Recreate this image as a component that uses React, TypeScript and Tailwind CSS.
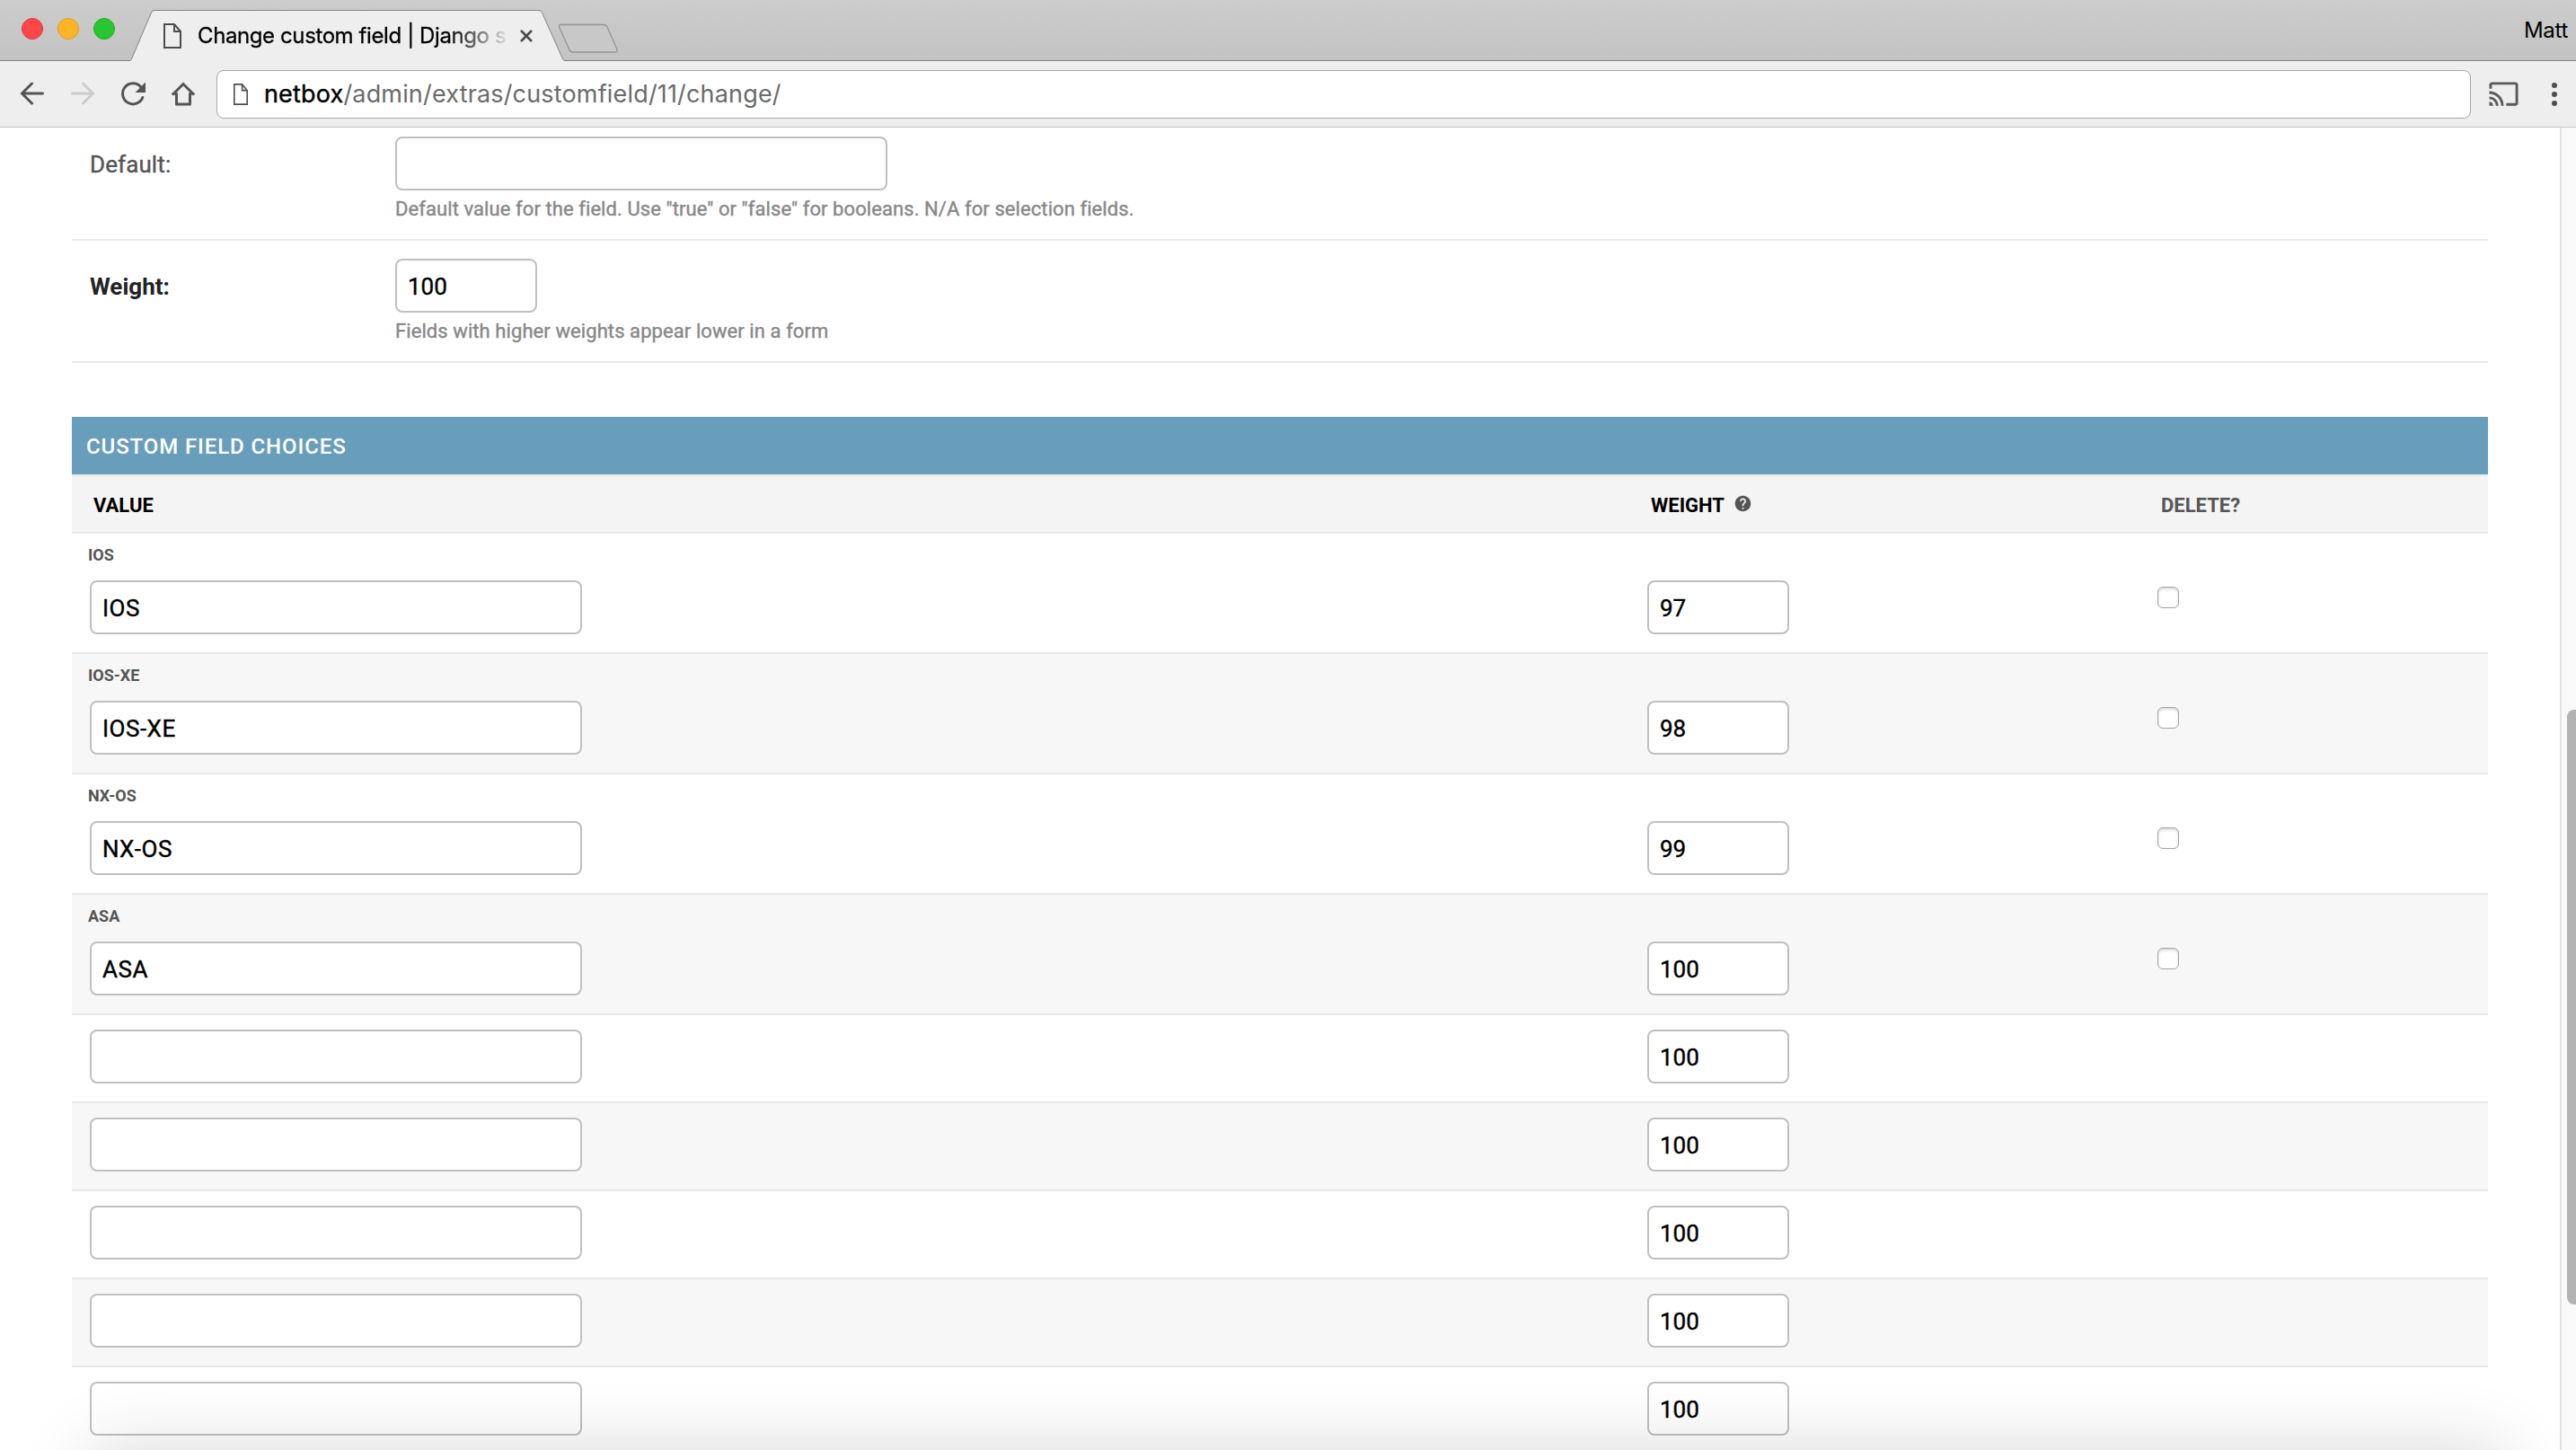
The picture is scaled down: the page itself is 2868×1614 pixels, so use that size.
import { MdCast, MdHelp } from 'react-icons/md';

type Choice = {
    label?: string;
    value: string;
    weight: string;
};

const choices: Choice[] = [
    { label: 'IOS', value: 'IOS', weight: '97' },
    { label: 'IOS-XE', value: 'IOS-XE', weight: '98' },
    { label: 'NX-OS', value: 'NX-OS', weight: '99' },
    { label: 'ASA', value: 'ASA', weight: '100' },
    { value: '', weight: '100' },
    { value: '', weight: '100' },
    { value: '', weight: '100' },
    { value: '', weight: '100' },
    { value: '', weight: '100' },
];

const inputClass =
    'block h-[60px] rounded-[8px] border-2 border-[#c0c0c0] bg-white pt-[2px] pl-3 text-[26px] text-black outline-none [font-kerning:none] [-webkit-text-stroke:0.4px_black]';

const helpClass = 'mt-[7px] text-[22px] leading-7 tracking-[0.08px] text-[#888888] [-webkit-text-stroke:0.4px_#888888]';

function PageIcon({ className }: { className: string }) {
    return (
        <svg className={className} viewBox="0 0 20 28" fill="none" stroke="#4d4d4d" strokeWidth="2" preserveAspectRatio="none">
            <path d="M1 1h11l7 8v18H1z" />
            <path d="M12 1v8h7" />
        </svg>
    );
}

function TabStrip() {
    return (
        <div className="relative flex h-[68px] items-start border-b border-[#838383] bg-linear-to-b from-[#cccccc] to-[#c3c3c3]">
            <div className="flex gap-4 pt-5 pl-6">
                <div className="size-6 rounded-full border border-[#e0393a] bg-[#fc4648]" />
                <div className="size-6 rounded-full border border-[#df9e23] bg-[#fdb427]" />
                <div className="size-6 rounded-full border border-[#1eac2b] bg-[#28c732]" />
            </div>

            <div className="relative ml-4 flex h-[68px] w-[486px] items-start">
                <svg className="absolute inset-0 h-[68px] w-[486px]" viewBox="0 0 486 68">
                    <path
                        d="M0 67.5C2 67.5 2.5 66 3 64.5L24.5 14Q25.5 11.5 28 11.5H456Q458.5 11.5 459.5 14L482 64.5C482.5 66 483 67.5 486 67.5V68H0z"
                        fill="#eeeeee"
                    />
                    <path
                        d="M0 67.5C2 67.5 2.5 66 3 64.5L24.5 14Q25.5 11.5 28 11.5H456Q458.5 11.5 459.5 14L482 64.5C482.5 66 483 67.5 486 67.5"
                        fill="none"
                        stroke="#838383"
                    />
                </svg>
                <PageIcon className="relative mt-[26px] ml-[38px] h-7 w-5" />
                <div className="relative mt-[24px] ml-[18px] w-[352px] overflow-hidden [mask-image:linear-gradient(to_right,black_278px,transparent_350px)]">
                    <span className="block whitespace-nowrap font-['Inter',sans-serif] text-[24px] leading-8 tracking-[-0.4px] text-black [-webkit-text-stroke:0.3px_black]">
                        Change custom field | Django s
                    </span>
                </div>
                <svg className="relative mt-[33px] ml-[7px] size-[14px]" viewBox="0 0 14 14" stroke="#4a4a4a" strokeWidth="2.5">
                    <path d="M1 1l12 12M13 1L1 13" />
                </svg>
            </div>

            <svg className="mt-[26px] -ml-[9px] h-[34px] w-[68px]" viewBox="0 0 68 34">
                <path
                    d="M3 1.5H51Q54 1.5 55 4L66 29Q67 32 64 32H17Q14 32 13 29.5L1.5 4Q1 1.5 3 1.5z"
                    fill="#c8c8c8"
                    stroke="#949494"
                    strokeWidth="1.3"
                />
            </svg>

            <span className="mt-[18px] ml-auto pr-[9px] font-['Inter',sans-serif] text-[24px] leading-8 tracking-[-0.3px] text-black">
                Matt
            </span>
        </div>
    );
}

function Toolbar() {
    return (
        <div className="flex h-[74px] items-center border-b border-[#c4c4c4] bg-[#eeeeee] pl-[22px]">
            <svg className="size-7" viewBox="0 0 28 28" fill="none" stroke="#545454" strokeWidth="3" strokeLinecap="round">
                <path d="M25.5 13H3M13.5 2L2.5 13l11 11" />
            </svg>
            <svg className="ml-7 size-7" viewBox="0 0 28 28" fill="none" stroke="#cccccc" strokeWidth="3" strokeLinecap="round">
                <path d="M2.500 13H25M14.500 2l11 11-11 11" />
            </svg>
            <svg className="ml-[27px] h-7 w-[30px]" viewBox="0 0 30 28" fill="none" stroke="#545454" strokeWidth="3">
                <path d="M25.8 17.500A11.500 11.500 0 1 1 23.500 5.500" strokeLinecap="round" />
                <path d="M29 0.500v11.500H17.500z" fill="#545454" stroke="none" />
            </svg>
            <svg className="ml-[27px] size-7" viewBox="0 0 28 28" fill="none" stroke="#545454" strokeWidth="3">
                <path d="M2 14.500L14 2.500l12 12" />
                <path d="M1.500 13.500H8M20 13.500h6.500" strokeWidth="2" />
                <path d="M6.500 12.500V25H21.500V12.500" strokeLinejoin="round" />
            </svg>

            <div className="ml-[23px] flex h-[54px] w-[2510px] items-center rounded-[8px] border border-[#a6a6a6] bg-white pl-[18px]">
                <PageIcon className="h-6 w-4" />
                <div className="ml-[18px] whitespace-nowrap font-['Inter',sans-serif] text-[27px] leading-8 tracking-[0.17px] text-[#6b6b6b]">
                    <span className="text-black [-webkit-text-stroke:0.4px_black]">netbox</span>/admin/extras/customfield/11/change/
                </div>
            </div>

            <MdCast className="ml-[19px] size-[35px] text-[#5a5a5a]" />
            <div className="ml-[36px] flex flex-col gap-1">
                <div className="size-1.5 rounded-full bg-[#4d4d4d]" />
                <div className="size-1.5 rounded-full bg-[#4d4d4d]" />
                <div className="size-1.5 rounded-full bg-[#4d4d4d]" />
            </div>
        </div>
    );
}

function ChoiceRow({ choice, odd }: { choice: Choice; odd: boolean }) {
    return (
        <div
            className={`grid grid-cols-[1734px_568px_1fr] border-b-2 border-[#e8e8e8] pb-5 ${odd ? 'bg-[#f7f7f7]' : 'bg-white'} ${
                choice.label ? 'pt-[52px]' : 'pt-4'
            }`}
        >
            <div className="relative pl-5">
                {choice.label && (
                    <span className="absolute -top-[40px] left-[18px] text-[18px] leading-6 font-bold text-[#555555]">
                        {choice.label}
                    </span>
                )}
                <input type="text" className={`${inputClass} w-[548px] tracking-[0.5px]`} defaultValue={choice.value} />
            </div>
            <div className="pl-5">
                <input type="text" className={`${inputClass} w-[158px]`} defaultValue={choice.weight} />
            </div>
            <div className="pt-[7px] pl-5">
                {choice.label && (
                    <input
                        type="checkbox"
                        className="block size-6 appearance-none rounded-[6px] border border-[#a3a3a3] bg-white shadow-[inset_0_2px_3px_rgba(0,0,0,0.15)]"
                    />
                )}
            </div>
        </div>
    );
}

function App() {
    return (
        <div className="relative flex h-[1614px] w-[2868px] flex-col overflow-hidden bg-white font-['Roboto',sans-serif]">
            <TabStrip />
            <Toolbar />

            <div className="flex min-h-0 flex-1">
                <div className="w-[2850px] overflow-hidden pr-20 pl-20">
                    <div className="flex h-[126px] border-b-2 border-[#e9e9e9] pt-[10px] pl-5">
                        <label className="w-[340px] pt-[15px] text-[26px] leading-8 tracking-[0.1px] text-[#555555] [-webkit-text-stroke:0.4px_#555555]">
                            Default:
                        </label>
                        <div>
                            <input type="text" className={`${inputClass} w-[548px]`} />
                            <p className={helpClass}>
                                Default value for the field. Use "true" or "false" for booleans. N/A for selection fields.
                            </p>
                        </div>
                    </div>
                    <div className="flex h-[136px] border-b-2 border-[#e9e9e9] pt-5 pl-5">
                        <label className="w-[340px] pt-[15px] text-[26px] leading-8 font-bold text-[#222222]">Weight:</label>
                        <div>
                            <input type="text" className={`${inputClass} w-[158px]`} defaultValue="100" />
                            <p className={helpClass}>Fields with higher weights appear lower in a form</p>
                        </div>
                    </div>

                    <h2 className="mt-[60px] flex h-16 items-center bg-[#689ebc] pt-[2px] pl-4 text-[24px] font-medium tracking-[0.9px] text-white">
                        CUSTOM FIELD CHOICES
                    </h2>
                    <div className="grid h-[66px] grid-cols-[1734px_568px_1fr] items-center border-y-2 border-[#e8e8e8] bg-[#f4f4f4] text-[22px] font-bold text-black">
                        <span className="pt-[2px] pl-6">VALUE</span>
                        <span className="flex items-center gap-[10px] pt-[2px] pl-6">
                            WEIGHT
                            <MdHelp className="-mt-[4px] size-[21px] text-[#555555]" />
                        </span>
                        <span className="pt-[2px] pl-6 text-[#555555]">DELETE?</span>
                    </div>
                    {choices.map((choice, index) => (
                        <ChoiceRow key={index} choice={choice} odd={index % 2 === 1} />
                    ))}
                </div>

                {/* Scrollbar */}
                <div className="flex w-[18px] flex-col items-end overflow-hidden border-l-2 border-[#e2e2e2] bg-[#f9f9f9] pt-[648px]">
                    <div className="h-[662px] w-[10px] rounded-l-[8px] bg-[#b3b3b3]" />
                </div>
            </div>

            {/* Soft shadow along the bottom of the window */}
            <div className="pointer-events-none absolute top-[1614px] left-[100px] h-[200px] w-[2690px] shadow-[0_0_80px_rgba(0,0,0,0.16)]" />
        </div>
    );
}

export default App;
